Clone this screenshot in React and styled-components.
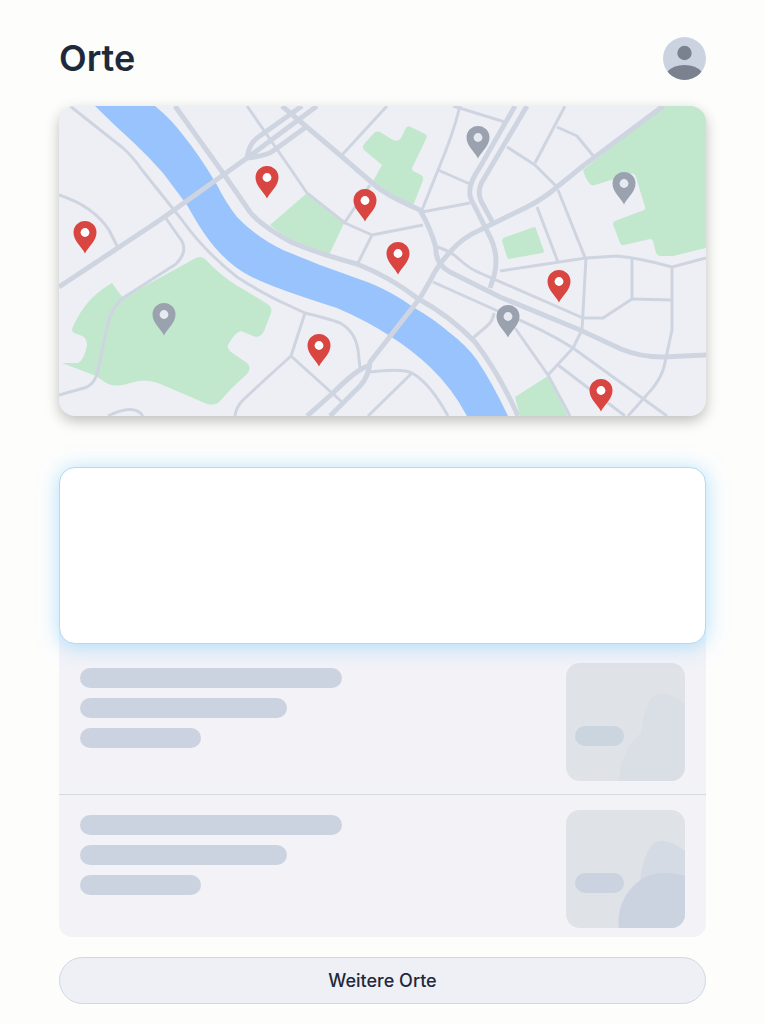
import styled, { createGlobalStyle } from "styled-components";

const GlobalStyle = createGlobalStyle`
  *,
  *::before,
  *::after {
    box-sizing: border-box;
  }

  body {
    margin: 0;
    background-color: #fdfdfc;
    color: #1e293b;
    font-family: Inter, "Liberation Sans", sans-serif;
  }
`;

const Page = styled.main`
  display: flex;
  flex-direction: column;
  padding: 37px 59px 20px;
`;

const Header = styled.header`
  display: flex;
  align-items: center;
  justify-content: space-between;
  margin-bottom: 26px;
`;

const Title = styled.h1`
  margin: 0;
  font-size: 36px;
  font-weight: 600;
  line-height: 43px;
`;

const Avatar = styled.svg`
  display: block;
  width: 43px;
  height: 43px;
  border-radius: 50%;
  background-color: #cbd3e1;
`;

const MapCard = styled.div`
  margin-bottom: 51px;
  overflow: hidden;
  border-radius: 16px;
  background-color: #eeeff4;
  box-shadow: 0 5px 14px rgba(0, 0, 0, 0.25);

  & > svg {
    display: block;
    width: 100%;
    height: auto;
  }
`;

const Highlight = styled.section`
  position: relative;
  z-index: 1;
  min-height: 177px;
  border: 1px solid #b5d9f0;
  border-radius: 16px;
  background-color: #fff;
  box-shadow: 0 2px 20px rgba(125, 205, 255, 0.6);
`;

const PlaceList = styled.ul`
  margin: -17px 0 20px;
  padding: 20px 0 0;
  list-style: none;
  border-radius: 0 0 13px 13px;
  background-color: #f2f2f7;
`;

const PlaceRow = styled.li`
  display: flex;
  justify-content: space-between;
  padding: 16px 21px 13px;
  border-bottom: 1px solid #d5dae1;

  & + & {
    padding-top: 15px;
  }

  &:last-child {
    padding-bottom: 9px;
    border-bottom: none;
  }
`;

const Lines = styled.div`
  display: flex;
  flex: 1;
  flex-direction: column;
  gap: 10px;
  padding-top: 5px;
`;

const Line = styled.span`
  width: ${(props) => props.$width};
  height: 20px;
  border-radius: 10px;
  background-color: #ccd3e0;
`;

const Thumb = styled.svg`
  flex: none;
  width: 119px;
  height: 118px;
  border-radius: 14px;
  background-color: #dfe2e7;
`;

const MoreButton = styled.button`
  height: 47px;
  border: 1px solid #cfd8e2;
  border-radius: 24px;
  background-color: #eef0f5;
  color: #1e293b;
  font-family: inherit;
  font-size: 18px;
  font-weight: 500;
  cursor: pointer;
`;

// the map is drawn in its own units, starting at 59/106
const parks = [
  "M62 363L78 363Q84 360 87 346Q87 337 80 335Q71 333 72 329Q80 310 92 298Q100 290 112 283L123 298L194 259Q200 255 205 259Q220 275 236 285L266 303Q273 307 271 313L264 331Q260 339 253 336L241 331Q235 332 228 345Q227 349 231 352L247 363Q252 368 247 374Q238 382 231 389L220 401Q216 406 207 404L158 383Q145 378 130 383Q116 388 106 383L96 376Z",
  "M375 132Q377 131 380 132L393 140Q399 142 401 138L406 128Q408 125 411 127L425 134Q428 136 426 139L412 168Q412 171 415 172L421 175Q424 177 423 180L413 206L372 183L382 165L364 150Q362 147 364 144Z",
  "M307 193L344 223L329 255Q296 247 270 225Z",
  "M503 238L534 227Q536 227 536 229L544 251Q544 253 542 253L509 259Q508 259 507 257L502 241Z",
  "M663 106H706V248L673 256H660Q657 255 656 253L653 241Q652 239 650 239L624 245Q621 246 620 243L613 224Q613 222 615 221L644 210Q646 209 645 207L636 177Q634 172 630 174L595 185Q592 186 590 184Q585 178 583 170Z",
  "M515 397L548 376L568 416H520Z",
];

const majorRoads = [
  "M59 287L160 220L247 158L317 106",
  "M663 106L583 166L557 187Q543 199 527 207L480 230Q463 237 450 252Q437 266 430 281L420 298L370 362Q369 376 360 386L330 416",
  "M282 106L340 155L377 187Q390 197 420 210Q431 229 436 248Q435 264 450 272L500 297L580 330L621 349Q640 357 663 357L706 355",
  "M175 106L223 173L250 212Q261 226 293 243Q320 254 357 264Q390 277 417 298Q450 316 475 342Q500 375 518 416",
  "M515 106L480 167Q466 187 471 199L488 233Q500 254 494 276L490 288",
  "M527 106L482 182Q477 191 481 201L493 223",
  "M247 158Q249 144 257 138L302 106",
  "M247 158Q266 156 273 151L306 127",
  "M368 366Q357 369 333 393L307 416",
];

const minorRoads = [
  "M70 106L123 148Q133 157 142 170L182 220Q204 251 237 277Q265 295 290 306L305 313Q330 319 340 323Q355 331 358 350L360 368",
  "M165 217L179 237Q190 250 176 264L123 298Q112 307 108 323L98 370Q95 385 84 388L59 395",
  "M59 195Q93 206 109 230L117 246",
  "M247 106L290 168L307 193L345 223L372 235L423 225",
  "M372 235L357 265",
  "M345 222L370 185",
  "M342 155L387 106",
  "M460 106Q453 135 438 170L422 210",
  "M453 106L505 122",
  "M438 170L470 184",
  "M422 212L470 203",
  "M438 247Q452 252 460 260Q470 269 480 273L583 318H603L632 299V258",
  "M632 299L672 300",
  "M500 271L586 258L617 256Q640 258 672 267L706 258",
  "M672 267V330L664 367Q661 378 652 389L628 416",
  "M586 258L582 330L573 348L548 375",
  "M537 207L558 262",
  "M558 190L586 260",
  "M433 282L500 312Q541 328 573 348L667 416",
  "M558 365L625 416",
  "M515 328L548 375L570 416",
  "M473 338L487 326Q493 321 494 313",
  "M370 372Q403 368 412 373Q430 383 448 416",
  "M412 373L368 416",
  "M305 313L291 356L342 402",
  "M291 356L270 375L243 400Q236 407 235 416",
  "M108 416Q134 403 143 416",
  "M565 106L535 163",
  "M507 147L535 165L557 187",
  "M557 127L577 136L595 158",
];

const pins = [
  { x: 85, y: 252, visited: false },
  { x: 267, y: 197, visited: false },
  { x: 365, y: 220, visited: false },
  { x: 398, y: 273, visited: false },
  { x: 559, y: 301, visited: false },
  { x: 319, y: 365, visited: false },
  { x: 601, y: 410, visited: false },
  { x: 164, y: 334, visited: true },
  { x: 478, y: 157, visited: true },
  { x: 624, y: 203, visited: true },
  { x: 508, y: 336, visited: true },
];

const CityMap = () => (
  <svg viewBox="59 106 647 310" aria-hidden="true">
    {parks.map((d) => (
      <path key={d} d={d} fill="#c1e7cc" />
    ))}
    <path
      d="M95 106Q113 124 133 142Q148 156 163 173L187 205Q200 229 212 244Q230 266 250 276Q270 287 337 308Q367 321 390 336Q412 350 430 367Q452 388 467 416H508Q493 384 477 360Q466 345 450 333Q434 319 413 307Q394 293 370 283L320 265L283 250Q256 237 237 217Q226 203 217 185Q200 156 183 135Q171 119 155 106Z"
      fill="#98c3fc"
    />
    <g fill="none" stroke="#ced5e1" strokeLinejoin="round">
      <g strokeWidth="3">
        {minorRoads.map((d) => (
          <path key={d} d={d} />
        ))}
      </g>
      <g strokeWidth="5">
        {majorRoads.map((d) => (
          <path key={d} d={d} />
        ))}
      </g>
    </g>
    {pins.map((pin) => (
      <g key={`${pin.x}-${pin.y}`} transform={`translate(${pin.x} ${pin.y})`}>
        <path
          d="M0 1.5C-3 -5 -11.5 -11 -11.5 -19.5A11.5 11.5 0 0 1 11.5 -19.5C11.5 -11 3 -5 0 1.5Z"
          fill={pin.visited ? "#9ba2af" : "#d94541"}
        />
        <circle cy="-19.5" r="4.4" fill={pin.visited ? "#e6eaf0" : "#fff"} />
      </g>
    ))}
  </svg>
);

const places = [
  { id: 1, tag: "#cbd5e0", lake: false },
  { id: 2, tag: "#cbd3e0", lake: true },
];

const App = () => {
  return (
    <>
      <GlobalStyle />
      <Page>
        <Header>
          <Title>Orte</Title>
          <Avatar viewBox="0 0 43 43" aria-hidden="true">
            <circle cx="21.5" cy="16" r="7.2" fill="#7a828f" />
            <path d="M4 35Q10 28 21.5 28T39 35V43H4Z" fill="#7a828f" />
          </Avatar>
        </Header>
        <MapCard>
          <CityMap />
        </MapCard>
        <Highlight />
        <PlaceList>
          {places.map((place) => (
            <PlaceRow key={place.id}>
              <Lines>
                <Line $width="262px" />
                <Line $width="207px" />
                <Line $width="121px" />
              </Lines>
              <Thumb viewBox="0 0 119 118" aria-hidden="true">
                {place.lake ? (
                  <>
                    <path
                      d="M74 70Q78 43 87 34Q98 25 119 41V118H74Z"
                      fill="#d5dbe4"
                    />
                    <path
                      d="M53 118C49 92 69 63 98 63Q110 63 119 66V118Z"
                      fill="#cbd3e0"
                    />
                  </>
                ) : (
                  <path
                    d="M53 118Q54 88 75 70Q78 43 87 34Q98 25 119 41V118Z"
                    fill="#dadfe5"
                  />
                )}
                <rect x="9" y="63" width="49" height="20" rx="10" fill={place.tag} />
              </Thumb>
            </PlaceRow>
          ))}
        </PlaceList>
        <MoreButton type="button">Weitere Orte</MoreButton>
      </Page>
    </>
  );
};

export default App;
